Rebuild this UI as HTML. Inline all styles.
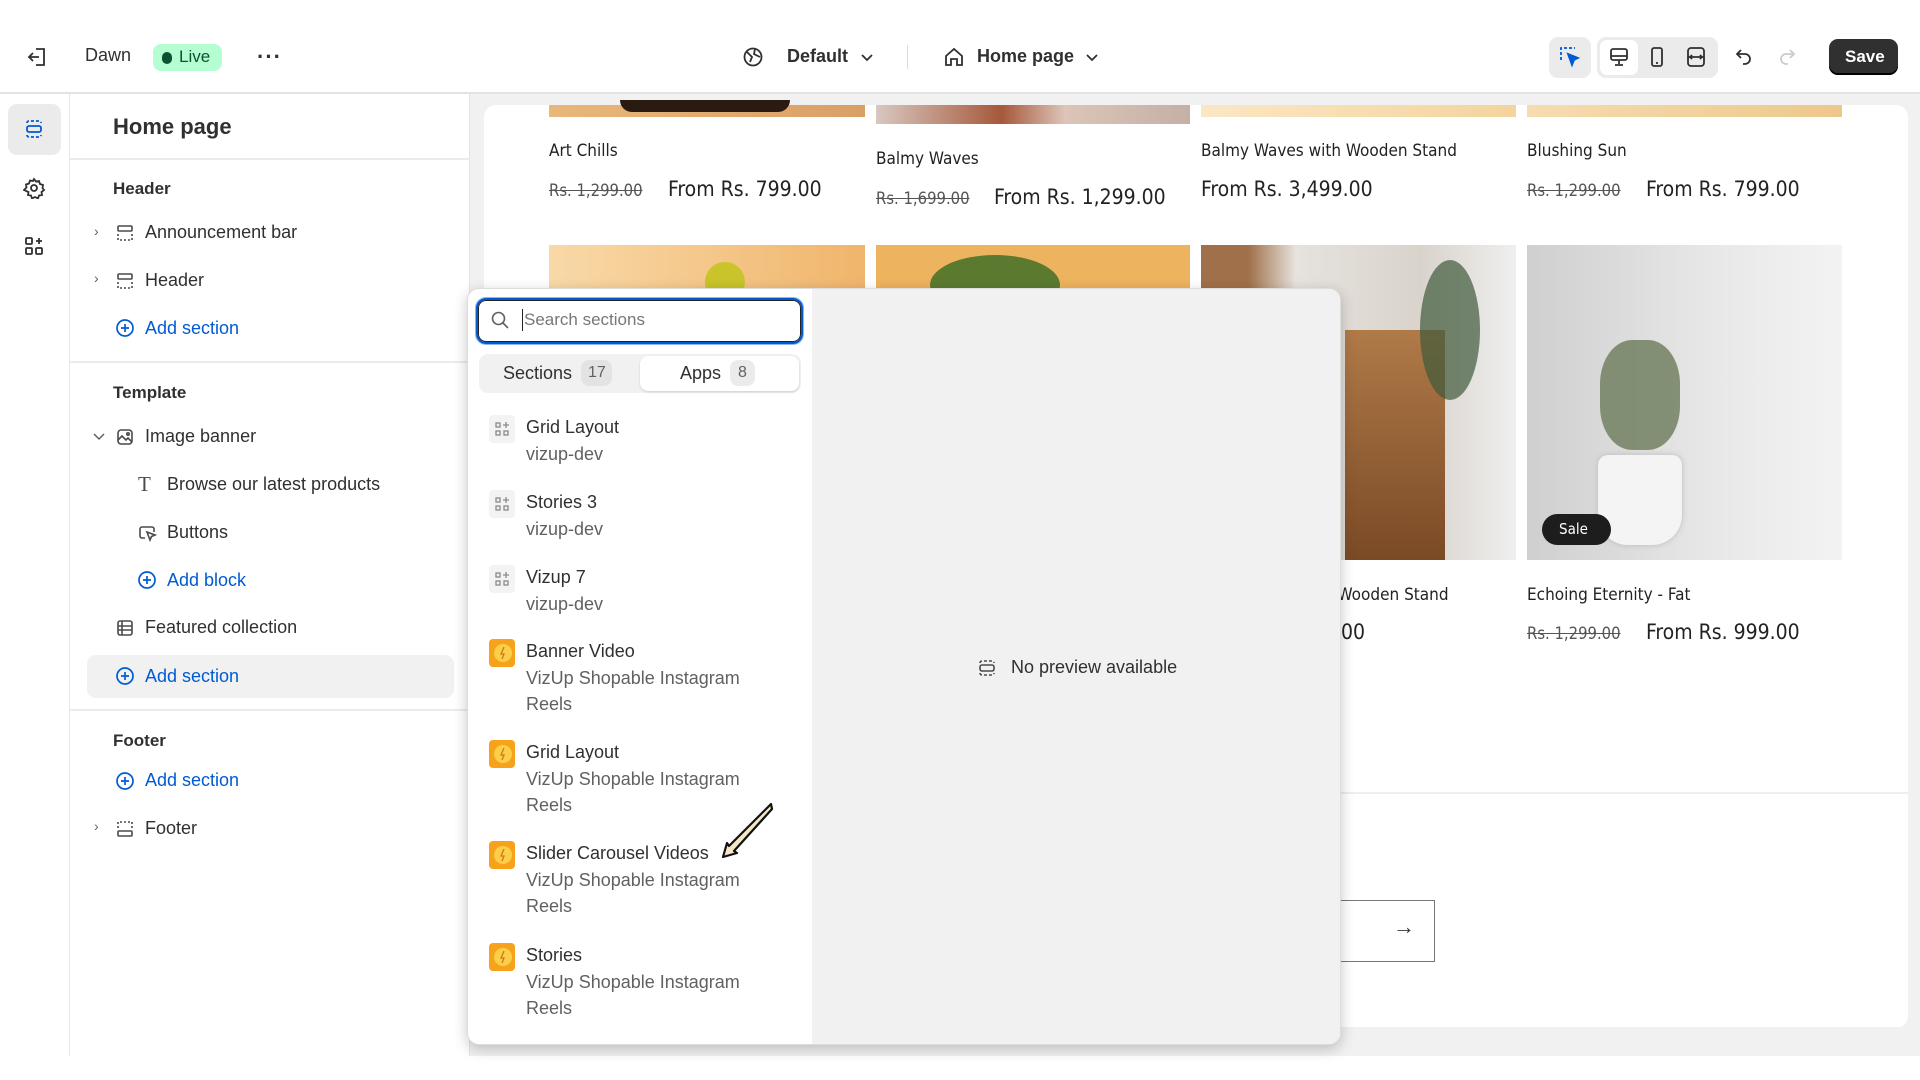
<!DOCTYPE html>
<html><head><meta charset="utf-8"><style>
*{box-sizing:border-box;margin:0;padding:0}
body{width:1920px;height:1080px;overflow:hidden;background:#fff;font-family:"Liberation Sans",sans-serif;color:#303030;position:relative}
.abs{position:absolute}
.t{position:absolute;white-space:nowrap}
.top{left:0;top:0;width:1920px;height:94px;background:#fff;border-bottom:2px solid #e3e3e3}
.rail{left:0;top:94px;width:70px;height:962px;background:#fff;border-right:1px solid #e6e6e6}
.side{left:70px;top:94px;width:400px;height:962px;background:#fff;border-right:1px solid #e3e3e3}
.prev{left:470px;top:94px;width:1450px;height:962px;background:#f1f1f1}
.card{left:484px;top:105px;width:1424px;height:923px;background:#fff;border-radius:12px}
.si{font-size:18px;color:#303030}
.blue{color:#005bd3}
.h{font-size:17px;font-weight:bold;color:#303030}
.sep{position:absolute;left:70px;width:400px;height:2px;background:#ebebeb}
.pt{font-family:"DejaVu Sans Condensed","Liberation Sans",sans-serif;font-size:17px;color:#222}
.pp{font-family:"DejaVu Sans Condensed","Liberation Sans",sans-serif;font-size:21px;color:#222}
.ps{font-family:"DejaVu Sans Condensed","Liberation Sans",sans-serif;font-size:16.5px;color:#555;text-decoration:line-through}
.pop{left:467px;top:288px;width:874px;height:757px;background:#fff;border-radius:12px;box-shadow:0 4px 14px rgba(0,0,0,.22);overflow:hidden;border:1px solid #ddd}
.pr{left:344px;top:0;width:530px;height:757px;background:#f1f1f1}
.it{font-size:18px;color:#303030}
.sub{font-size:18px;color:#616161}
.ico{position:absolute;width:26px;height:28px;border-radius:4px}
.gi{background:#f3f3f3}
.ai{background:#f7a21b}
</style></head><body>
<div class="abs top"></div>
<svg class="abs" style="left:26px;top:45px" width="24" height="24" viewBox="0 0 24 24" fill="none" stroke="#303030" stroke-width="1.8"><path d="M10 4h8v16h-8M3 12h10M7 8l-4 4 4 4"/></svg>
<div class="t" style="left:85px;top:45px;font-size:18px">Dawn</div>
<div class="abs" style="left:153px;top:44px;width:69px;height:27px;border-radius:8px;background:#b4fed2"></div>
<div class="abs" style="left:162px;top:52px;width:10px;height:12px;border-radius:5px;background:#0c5132"></div>
<div class="t" style="left:179px;top:47px;font-size:17px;color:#0c5132">Live</div>
<div class="t" style="left:257px;top:44px;font-size:22px;font-weight:bold;letter-spacing:1px">···</div>
<svg class="abs" style="left:742px;top:46px" width="22" height="22" viewBox="0 0 22 22" fill="none" stroke="#303030" stroke-width="1.8"><circle cx="11" cy="11" r="8.5"/><path d="M5 6l5 5-2 5M13 3l-1 5 6 3"/></svg>
<div class="t" style="left:787px;top:46px;font-size:18px;font-weight:bold">Default</div>
<svg class="abs" style="left:860px;top:53px" width="14" height="10" viewBox="0 0 14 10" fill="none" stroke="#303030" stroke-width="1.8"><path d="M2 2l5 5 5-5"/></svg>
<div class="abs" style="left:907px;top:45px;width:1px;height:24px;background:#ddd"></div>
<svg class="abs" style="left:943px;top:46px" width="22" height="22" viewBox="0 0 22 22" fill="none" stroke="#303030" stroke-width="1.8"><path d="M3 10l8-7 8 7v9h-5v-6h-6v6H3z"/></svg>
<div class="t" style="left:977px;top:46px;font-size:18px;font-weight:bold">Home page</div>
<svg class="abs" style="left:1085px;top:53px" width="14" height="10" viewBox="0 0 14 10" fill="none" stroke="#303030" stroke-width="1.8"><path d="M2 2l5 5 5-5"/></svg>
<div class="abs" style="left:1549px;top:37px;width:42px;height:41px;border-radius:9px;background:#ebebeb"></div>
<svg class="abs" style="left:1559px;top:46px" width="22" height="22" viewBox="0 0 22 22" fill="none" stroke="#005bd3" stroke-width="1.8" stroke-dasharray="3 2"><path d="M2 14V2h14"/><path d="M9 8l10 4-4 2-2 5z" fill="#005bd3" stroke-dasharray="0"/></svg>
<div class="abs" style="left:1597px;top:37px;width:121px;height:41px;border-radius:9px;background:#ebebeb"></div>
<div class="abs" style="left:1600px;top:40px;width:38px;height:35px;border-radius:7px;background:#fff"></div>
<svg class="abs" style="left:1608px;top:46px" width="22" height="22" viewBox="0 0 22 22" fill="none" stroke="#303030" stroke-width="1.8"><rect x="3" y="3" width="16" height="11" rx="2"/><path d="M3 10h16M11 14v4M7 19h8"/></svg>
<svg class="abs" style="left:1646px;top:46px" width="22" height="22" viewBox="0 0 22 22" fill="none" stroke="#303030" stroke-width="1.8"><rect x="6" y="2" width="10" height="18" rx="2"/><path d="M10 17h2"/></svg>
<svg class="abs" style="left:1685px;top:46px" width="22" height="22" viewBox="0 0 22 22" fill="none" stroke="#303030" stroke-width="1.8"><rect x="3" y="2" width="16" height="18" rx="3"/><path d="M3 11h16M7 9l-2 2 2 2M15 9l2 2-2 2"/></svg>
<svg class="abs" style="left:1733px;top:46px" width="22" height="22" viewBox="0 0 22 22" fill="none" stroke="#303030" stroke-width="1.8"><path d="M8 4L4 8l4 4M4 8h8a5 5 0 010 10h-2"/></svg>
<svg class="abs" style="left:1776px;top:46px" width="22" height="22" viewBox="0 0 22 22" fill="none" stroke="#ccc" stroke-width="1.8"><path d="M14 4l4 4-4 4M18 8h-8a5 5 0 000 10h2"/></svg>
<div class="abs" style="left:1829px;top:39px;width:69px;height:36px;border-radius:9px;background:#303030;box-shadow:inset 0 -2px 0 #000"></div>
<div class="t" style="left:1845px;top:47px;font-size:17px;font-weight:bold;color:#fff">Save</div>

<div class="abs rail"></div>
<div class="abs" style="left:8px;top:104px;width:53px;height:51px;border-radius:9px;background:#ebebeb"></div>
<svg class="abs" style="left:23px;top:118px" width="22" height="22" viewBox="0 0 22 22" fill="none" stroke="#005bd3" stroke-width="1.8"><path d="M4 5a2 2 0 012-2h10a2 2 0 012 2M4 17a2 2 0 002 2h10a2 2 0 002-2" stroke-dasharray="3 2"/><rect x="4" y="8" width="14" height="6" rx="2"/></svg>
<svg class="abs" style="left:23px;top:177px" width="22" height="22" viewBox="0 0 22 22" fill="none" stroke="#303030" stroke-width="1.8"><circle cx="11" cy="11" r="3"/><path d="M11 2l2 2.5 3-.5 1 3 3 1-.5 3L21 13l-2.5 2 .5 3-3 .5-1 3-3-1.5-3 1.5-1-3-3-.5.5-3L1 13l2.5-2.5L3 7.5l3-1 1-3 3 .5z"/></svg>
<svg class="abs" style="left:23px;top:235px" width="22" height="22" viewBox="0 0 22 22" fill="none" stroke="#303030" stroke-width="1.8"><rect x="3" y="3" width="6" height="6" rx="1"/><rect x="3" y="13" width="6" height="6" rx="1"/><rect x="13" y="13" width="6" height="6" rx="1"/><path d="M16 3v6M13 6h6"/></svg>

<div class="abs side"></div>
<div class="t" style="left:113px;top:114px;font-size:22px;font-weight:bold">Home page</div>
<div class="sep" style="top:158px"></div>
<div class="t h" style="left:113px;top:179px">Header</div>
<div class="t si" style="left:94px;top:223px;font-size:14px;color:#616161">›</div>
<svg class="abs" style="left:115px;top:223px" width="20" height="20" viewBox="0 0 20 20" fill="none" stroke="#4a4a4a" stroke-width="1.6"><rect x="3" y="3" width="14" height="5" rx="1"/><path d="M3 11v6h14v-6" stroke-dasharray="2 2"/></svg>
<div class="t si" style="left:145px;top:222px">Announcement bar</div>
<div class="t si" style="left:94px;top:270px;font-size:14px;color:#616161">›</div>
<svg class="abs" style="left:115px;top:271px" width="20" height="20" viewBox="0 0 20 20" fill="none" stroke="#4a4a4a" stroke-width="1.6"><rect x="3" y="3" width="14" height="5" rx="1"/><path d="M3 11v6h14v-6" stroke-dasharray="2 2"/></svg>
<div class="t si" style="left:145px;top:270px">Header</div>
<svg class="abs" style="left:115px;top:318px" width="20" height="20" viewBox="0 0 20 20" fill="none" stroke="#005bd3" stroke-width="1.7"><circle cx="10" cy="10" r="8"/><path d="M10 6v8M6 10h8"/></svg>
<div class="t si blue" style="left:145px;top:318px">Add section</div>
<div class="sep" style="top:361px"></div>
<div class="t h" style="left:113px;top:383px">Template</div>
<svg class="abs" style="left:92px;top:431px" width="14" height="12" viewBox="0 0 14 12" fill="none" stroke="#616161" stroke-width="1.5"><path d="M2 3l5 5 5-5"/></svg>
<svg class="abs" style="left:115px;top:427px" width="20" height="20" viewBox="0 0 20 20" fill="none" stroke="#4a4a4a" stroke-width="1.6"><rect x="3" y="3" width="14" height="14" rx="3"/><path d="M3 13l4-4 4 4 2-2 4 4"/><circle cx="13" cy="7" r="1.2"/></svg>
<div class="t si" style="left:145px;top:426px">Image banner</div>
<div class="t" style="left:138px;top:472px;font-size:21px;font-family:'Liberation Serif',serif;color:#4a4a4a">T</div>
<div class="t si" style="left:167px;top:474px">Browse our latest products</div>
<svg class="abs" style="left:137px;top:523px" width="20" height="20" viewBox="0 0 20 20" fill="none" stroke="#4a4a4a" stroke-width="1.6"><path d="M8 15H5a2 2 0 01-2-2V6a2 2 0 012-2h10a2 2 0 012 2v3"/><path d="M10 9l8 3-3.5 1.5L13 17z"/></svg>
<div class="t si" style="left:167px;top:522px">Buttons</div>
<svg class="abs" style="left:137px;top:570px" width="20" height="20" viewBox="0 0 20 20" fill="none" stroke="#005bd3" stroke-width="1.7"><circle cx="10" cy="10" r="8"/><path d="M10 6v8M6 10h8"/></svg>
<div class="t si blue" style="left:167px;top:570px">Add block</div>
<svg class="abs" style="left:115px;top:618px" width="20" height="20" viewBox="0 0 20 20" fill="none" stroke="#4a4a4a" stroke-width="1.6"><rect x="3" y="3" width="14" height="14" rx="2"/><path d="M3 8h14M3 12h14M7 3v14"/></svg>
<div class="t si" style="left:145px;top:617px">Featured collection</div>
<div class="abs" style="left:87px;top:655px;width:367px;height:43px;border-radius:9px;background:#f1f1f1"></div>
<svg class="abs" style="left:115px;top:666px" width="20" height="20" viewBox="0 0 20 20" fill="none" stroke="#005bd3" stroke-width="1.7"><circle cx="10" cy="10" r="8"/><path d="M10 6v8M6 10h8"/></svg>
<div class="t si blue" style="left:145px;top:666px">Add section</div>
<div class="sep" style="top:709px"></div>
<div class="t h" style="left:113px;top:731px">Footer</div>
<svg class="abs" style="left:115px;top:771px" width="20" height="20" viewBox="0 0 20 20" fill="none" stroke="#005bd3" stroke-width="1.7"><circle cx="10" cy="10" r="8"/><path d="M10 6v8M6 10h8"/></svg>
<div class="t si blue" style="left:145px;top:770px">Add section</div>
<div class="t si" style="left:94px;top:818px;font-size:14px;color:#616161">›</div>
<svg class="abs" style="left:115px;top:819px" width="20" height="20" viewBox="0 0 20 20" fill="none" stroke="#4a4a4a" stroke-width="1.6"><path d="M3 9V3h14v6" stroke-dasharray="2 2"/><rect x="3" y="12" width="14" height="5" rx="1"/></svg>
<div class="t si" style="left:145px;top:818px">Footer</div>

<div class="abs prev"></div>
<div class="abs card"></div>
<div class="abs" style="left:549px;top:105px;width:316px;height:12px;background:linear-gradient(90deg,#e9b77a,#d9a066)"></div>
<div class="abs" style="left:620px;top:100px;width:170px;height:12px;border-radius:0 0 85px 85px;background:#2b1a10"></div>
<div class="abs" style="left:876px;top:105px;width:314px;height:19px;background:linear-gradient(90deg,#d8c8c0,#a6583a 40%,#dcc4b8 60%,#c5b0a5)"></div>
<div class="abs" style="left:1201px;top:105px;width:315px;height:12px;background:linear-gradient(90deg,#fbe7c4,#f3d49e)"></div>
<div class="abs" style="left:1527px;top:105px;width:315px;height:12px;background:linear-gradient(90deg,#f6dcb0,#edc88c)"></div>
<div class="t pt" style="left:549px;top:141px">Art Chills</div>
<div class="t ps" style="left:549px;top:181px">Rs. 1,299.00</div>
<div class="t pp" style="left:668px;top:177px">From Rs. 799.00</div>
<div class="t pt" style="left:876px;top:149px">Balmy Waves</div>
<div class="t ps" style="left:876px;top:189px">Rs. 1,699.00</div>
<div class="t pp" style="left:994px;top:185px">From Rs. 1,299.00</div>
<div class="t pt" style="left:1201px;top:141px">Balmy Waves with Wooden Stand</div>
<div class="t pp" style="left:1201px;top:177px">From Rs. 3,499.00</div>
<div class="t pt" style="left:1527px;top:141px">Blushing Sun</div>
<div class="t ps" style="left:1527px;top:181px">Rs. 1,299.00</div>
<div class="t pp" style="left:1646px;top:177px">From Rs. 799.00</div>
<div class="abs" style="left:549px;top:245px;width:316px;height:315px;background:linear-gradient(90deg,#f9d9a8,#f0b56c)"></div>
<div class="abs" style="left:705px;top:262px;width:40px;height:40px;border-radius:50%;background:#c9c42a"></div>
<div class="abs" style="left:876px;top:245px;width:314px;height:315px;background:#edb35e"></div>
<div class="abs" style="left:930px;top:255px;width:130px;height:60px;border-radius:50%;background:#5b7a30"></div>
<div class="abs" style="left:1201px;top:245px;width:315px;height:315px;background:linear-gradient(90deg,#a0704a 0 15%,#e6e2dd 30%,#d9d3cc 70%,#efefef)"></div>
<div class="abs" style="left:1345px;top:330px;width:100px;height:230px;background:linear-gradient(180deg,#b07a48,#7a4a26)"></div>
<div class="abs" style="left:1420px;top:260px;width:60px;height:140px;border-radius:50%;background:#3f5a3a;opacity:.7"></div>
<div class="abs" style="left:1527px;top:245px;width:315px;height:315px;background:linear-gradient(90deg,#cfcfcf,#e8e8e8 60%,#f3f3f3)"></div>
<div class="abs" style="left:1600px;top:340px;width:80px;height:110px;border-radius:40%;background:#6b7a5a;opacity:.8"></div>
<div class="abs" style="left:1598px;top:455px;width:84px;height:90px;border-radius:10px 10px 30px 30px;background:#f4f4f4;box-shadow:0 0 6px #bbb"></div>
<div class="abs" style="left:1542px;top:514px;width:69px;height:31px;border-radius:16px;background:#1d1d1d"></div>
<div class="t" style="left:1559px;top:520px;font-size:15px;color:#fff;font-family:'DejaVu Sans Condensed',sans-serif">Sale</div>
<div class="t pt" style="left:1323px;top:585px">h Wooden Stand</div>
<div class="t pp" style="left:1323px;top:620px">9.00</div>
<div class="t pt" style="left:1527px;top:585px">Echoing Eternity - Fat</div>
<div class="t ps" style="left:1527px;top:624px">Rs. 1,299.00</div>
<div class="t pp" style="left:1646px;top:620px">From Rs. 999.00</div>
<div class="abs" style="left:1330px;top:792px;width:578px;height:2px;background:#eee"></div>
<div class="abs" style="left:1300px;top:900px;width:135px;height:62px;border:1.5px solid #777"></div>
<div class="t" style="left:1393px;top:914px;font-size:22px;color:#333">→</div>
<div class="abs" style="left:1330px;top:1027px;width:578px;height:3px;background:#f1f1f1"></div>

<div class="abs pop">
 <div class="abs pr"></div>
 <div class="abs" style="left:8px;top:9px;width:327px;height:46px;border:2px solid #005bd3;border-radius:10px;box-shadow:0 0 0 1px #8fb6ee"></div>
 <div class="abs" style="left:10px;top:11px;width:323px;height:42px;border:1px solid #222;border-radius:8px"></div>
 <svg class="abs" style="left:22px;top:21px" width="20" height="20" viewBox="0 0 20 20" fill="none" stroke="#616161" stroke-width="1.6"><circle cx="8.5" cy="8.5" r="6"/><path d="M13 13l5 5"/></svg>
 <div class="abs" style="left:54px;top:20px;width:1px;height:22px;background:#222"></div>
 <div class="t" style="left:56px;top:21px;font-size:17px;color:#777">Search sections</div>
 <div class="abs" style="left:11px;top:65px;width:322px;height:39px;border-radius:9px;background:#f1f1f1"></div>
 <div class="abs" style="left:172px;top:67px;width:159px;height:35px;border-radius:8px;background:#fff;box-shadow:0 1px 2px rgba(0,0,0,.15)"></div>
 <div class="t" style="left:35px;top:74px;font-size:18px">Sections</div>
 <div class="abs" style="left:113px;top:71px;width:31px;height:26px;border-radius:8px;background:#e3e3e3"></div>
 <div class="t" style="left:120px;top:75px;font-size:16px;color:#616161">17</div>
 <div class="t" style="left:212px;top:74px;font-size:18px">Apps</div>
 <div class="abs" style="left:262px;top:71px;width:25px;height:26px;border-radius:8px;background:#ebebeb"></div>
 <div class="t" style="left:270px;top:75px;font-size:16px;color:#616161">8</div>

 <div class="ico gi" style="left:21px;top:126px"></div>
 <div class="t it" style="left:58px;top:128px">Grid Layout</div><div class="t sub" style="left:58px;top:155px">vizup-dev</div>
 <div class="ico gi" style="left:21px;top:201px"></div>
 <div class="t it" style="left:58px;top:203px">Stories 3</div><div class="t sub" style="left:58px;top:230px">vizup-dev</div>
 <div class="ico gi" style="left:21px;top:276px"></div>
 <div class="t it" style="left:58px;top:278px">Vizup 7</div><div class="t sub" style="left:58px;top:305px">vizup-dev</div>
 <div class="ico ai" style="left:21px;top:350px"></div>
 <div class="t it" style="left:58px;top:352px">Banner Video</div><div class="t sub" style="left:58px;top:379px">VizUp Shopable Instagram</div><div class="t sub" style="left:58px;top:405px">Reels</div>
 <div class="ico ai" style="left:21px;top:451px"></div>
 <div class="t it" style="left:58px;top:453px">Grid Layout</div><div class="t sub" style="left:58px;top:480px">VizUp Shopable Instagram</div><div class="t sub" style="left:58px;top:506px">Reels</div>
 <div class="ico ai" style="left:21px;top:552px"></div>
 <div class="t it" style="left:58px;top:554px">Slider Carousel Videos</div><div class="t sub" style="left:58px;top:581px">VizUp Shopable Instagram</div><div class="t sub" style="left:58px;top:607px">Reels</div>
 <div class="ico ai" style="left:21px;top:654px"></div>
 <div class="t it" style="left:58px;top:656px">Stories</div><div class="t sub" style="left:58px;top:683px">VizUp Shopable Instagram</div><div class="t sub" style="left:58px;top:709px">Reels</div>

 <svg class="abs" style="left:508px;top:368px" width="22" height="22" viewBox="0 0 22 22" fill="none" stroke="#4a4a4a" stroke-width="1.6"><path d="M4 6a2 2 0 012-2h10a2 2 0 012 2M4 16a2 2 0 002 2h10a2 2 0 002-2" stroke-dasharray="3 2"/><rect x="4" y="8" width="14" height="6" rx="2"/></svg>
 <div class="t" style="left:543px;top:368px;font-size:18px">No preview available</div>
</div>
<svg class="abs" style="left:490px;top:639px" width="26" height="28"><circle cx="13" cy="14" r="9" fill="#fbd048"/><path d="M14 8l-3 7h3l-2 5" stroke="#d4761a" fill="none" stroke-width="1.3"/></svg>
<svg class="abs" style="left:490px;top:740px" width="26" height="28"><circle cx="13" cy="14" r="9" fill="#fbd048"/><path d="M14 8l-3 7h3l-2 5" stroke="#d4761a" fill="none" stroke-width="1.3"/></svg>
<svg class="abs" style="left:490px;top:841px" width="26" height="28"><circle cx="13" cy="14" r="9" fill="#fbd048"/><path d="M14 8l-3 7h3l-2 5" stroke="#d4761a" fill="none" stroke-width="1.3"/></svg>
<svg class="abs" style="left:490px;top:943px" width="26" height="28"><circle cx="13" cy="14" r="9" fill="#fbd048"/><path d="M14 8l-3 7h3l-2 5" stroke="#d4761a" fill="none" stroke-width="1.3"/></svg>
<svg class="abs" style="left:492px;top:419px" width="20" height="20" viewBox="0 0 20 20" fill="none" stroke="#8a8a8a" stroke-width="1.3"><rect x="4" y="4" width="4" height="4"/><rect x="4" y="12" width="4" height="4"/><rect x="12" y="12" width="4" height="4"/><path d="M14 3v6M11 6h6"/></svg>
<svg class="abs" style="left:492px;top:494px" width="20" height="20" viewBox="0 0 20 20" fill="none" stroke="#8a8a8a" stroke-width="1.3"><rect x="4" y="4" width="4" height="4"/><rect x="4" y="12" width="4" height="4"/><rect x="12" y="12" width="4" height="4"/><path d="M14 3v6M11 6h6"/></svg>
<svg class="abs" style="left:492px;top:569px" width="20" height="20" viewBox="0 0 20 20" fill="none" stroke="#8a8a8a" stroke-width="1.3"><rect x="4" y="4" width="4" height="4"/><rect x="4" y="12" width="4" height="4"/><rect x="12" y="12" width="4" height="4"/><path d="M14 3v6M11 6h6"/></svg>
<svg class="abs" style="left:715px;top:800px" width="60" height="60" viewBox="0 0 60 60"><path d="M56 4L14 46l-2-3-4 14 14-4-3-2L57 9z" fill="#f3e9c8" stroke="#111" stroke-width="2.2" stroke-linejoin="round"/></svg>
</body></html>
